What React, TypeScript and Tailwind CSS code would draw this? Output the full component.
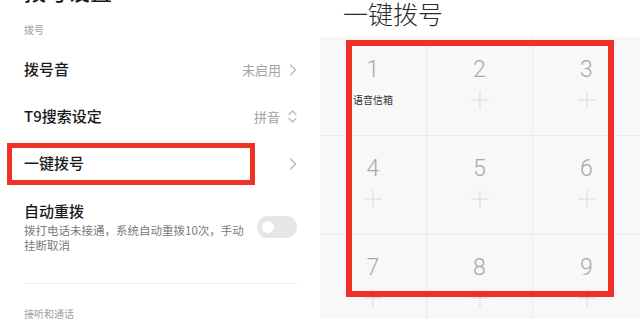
import React from "react";

const Chevron: React.FC = () => (
  <svg width="8" height="12" viewBox="0 0 8 12" fill="none" className="ml-[8px]">
    <path d="M1.5 1 L6.5 6 L1.5 11" stroke="#b5b5b5" strokeWidth="1.2" strokeLinecap="round" strokeLinejoin="round" />
  </svg>
);

const UpDown: React.FC = () => (
  <svg width="9" height="13" viewBox="0 0 9 13" fill="none" className="ml-[8px]">
    <path d="M1 4.5 L4.5 1 L8 4.5" stroke="#b5b5b5" strokeWidth="1.2" strokeLinecap="round" strokeLinejoin="round" />
    <path d="M1 8.5 L4.5 12 L8 8.5" stroke="#b5b5b5" strokeWidth="1.2" strokeLinecap="round" strokeLinejoin="round" />
  </svg>
);

const Plus: React.FC = () => (
  <svg width="18" height="18" viewBox="0 0 18 18" fill="none">
    <path d="M9 0 V18 M0 9 H18" stroke="#d9d9d9" strokeWidth="1" />
  </svg>
);

const Row: React.FC<{ title: string; value?: string; icon: React.ReactNode }> = ({ title, value, icon }) => (
  <div className="h-[47px] flex items-center justify-between">
    <span className="text-[15px] font-medium text-[#1a1a1a]">{title}</span>
    <span className="flex items-center text-[13px] text-[#a3a3a3]">
      {value}
      {icon}
    </span>
  </div>
);

const keys = ["1", "2", "3", "4", "5", "6", "7", "8", "9"];

export default function App() {
  return (
    <div
      className="relative w-[640px] h-[319px] overflow-hidden bg-white flex"
      style={{ fontFamily: '"Noto Sans CJK SC", "Noto Sans", sans-serif' }}
    >
      {/* settings list */}
      <div className="w-[320px] shrink-0 pl-6 pr-[23px] flex flex-col">
        <div className="shrink-0 -mt-[21px] h-[25px] leading-[22px] text-[22px] font-medium text-[#1a1a1a]">拨号设置</div>
        <div className="shrink-0 mt-[16px] h-[20px] leading-[20px] text-[10px] text-[#9aa0a8]">拨号</div>
        <div className="shrink-0 mt-[6px]">
          <Row title="拨号音" value="未启用" icon={<Chevron />} />
          <Row title="T9搜索设定" value="拼音" icon={<UpDown />} />
          <Row title="一键拨号" icon={<Chevron />} />
        </div>
        <div className="shrink-0 pt-[14px] flex items-center justify-between">
          <div className="w-[225px]">
            <div className="leading-[20px] text-[15px] font-medium text-[#1a1a1a]">自动重拨</div>
            <div className="mt-[2px] leading-[15px] text-[11.5px] text-[#7a7a7a]">
              拨打电话未接通，系统自动重拨10次，手动挂断取消
            </div>
          </div>
          <div className="w-[40px] h-[22px] rounded-full bg-[#e6e6e6] flex items-center pl-[5px]">
            <div className="w-[12px] h-[12px] rounded-full bg-white" />
          </div>
        </div>
        <div className="shrink-0 mt-[30px] h-px bg-[#ededed]" />
        <div className="shrink-0 mt-[20px] h-[20px] leading-[20px] text-[10px] text-[#9aa0a8]">接听和通话</div>
      </div>

      {/* quick dial */}
      <div className="w-[320px] shrink-0 flex flex-col">
        <div className="shrink-0 h-[37px] bg-white pl-[23px] leading-[26px] text-[25px] font-light text-[#2a2a2a]">一键拨号</div>
        <div className="shrink-0 bg-[#f8f8f8] grid grid-cols-[107px_106px_107px] grid-rows-[99px_99px_99px]">
          {keys.map((k, i) => (
            <div
              key={k}
              className={`flex flex-col items-center pt-[21px] border-b border-[#ebebeb] ${i % 3 !== 2 ? "border-r" : ""}`}
            >
              <span
                className="text-[23px] leading-[24px] font-light text-[#a8a8a8]"
                style={{ fontFamily: "Roboto, sans-serif" }}
              >
                {k}
              </span>
              {k === "1" ? (
                <span className="mt-[10px] leading-[16px] text-[10px] text-[#333]">语音信箱</span>
              ) : (
                <div className="mt-[9px]">
                  <Plus />
                </div>
              )}
            </div>
          ))}
        </div>
      </div>

      {/* annotation boxes */}
      <div className="absolute left-[7px] top-[143px] w-[248px] h-[42px] border-[5px] border-[#ee3124]" />
      <div className="absolute left-[346px] top-[40px] w-[268px] h-[257px] border-[6px] border-[#ee3124]" />
    </div>
  );
}
